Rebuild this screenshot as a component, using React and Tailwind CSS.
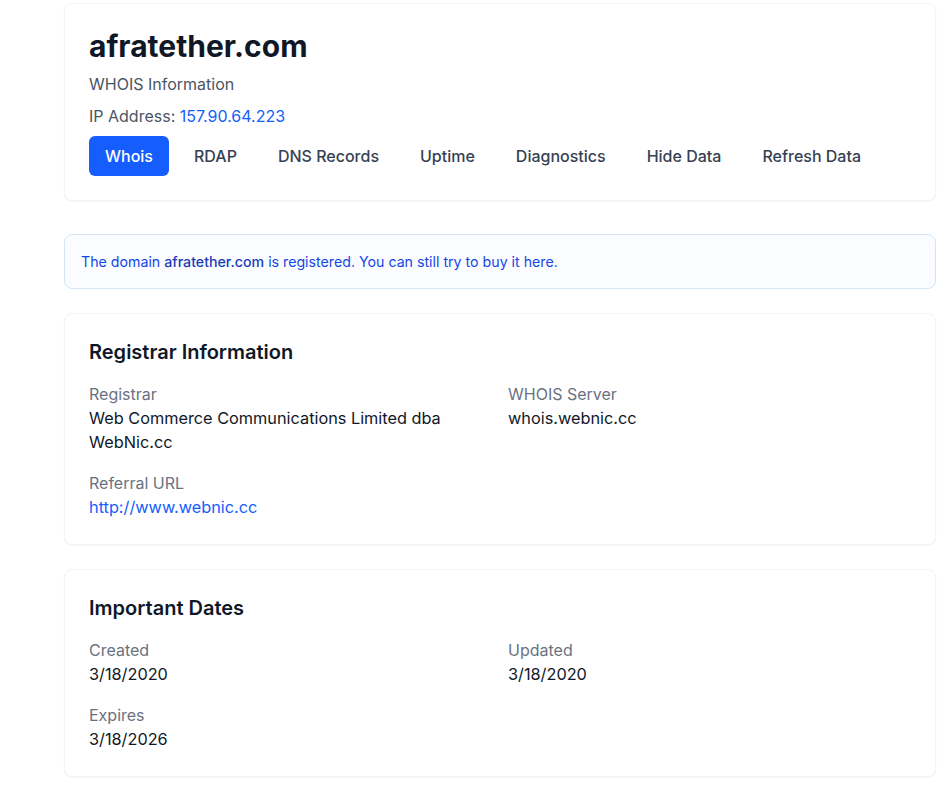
import React from 'react';

const tabs = ['Whois', 'RDAP', 'DNS Records', 'Uptime', 'Diagnostics', 'Hide Data', 'Refresh Data'];

const Field = ({ label, children }) => (
  <div>
    <div className="text-gray-500">{label}</div>
    <div className="text-[16.3px] leading-6 text-gray-900">{children}</div>
  </div>
);

const Card = ({ title, children }) => (
  <div className="rounded-lg border border-gray-100 bg-white px-6 pb-[25px] pt-6 shadow-[0_1px_2px_rgba(0,0,0,0.03)]">
    <h2 className="mb-4 text-xl font-semibold text-gray-900">{title}</h2>
    {children}
  </div>
);

export default function App() {
  return (
    <div
      className="min-h-screen bg-white pl-[64px] pr-[4px] pt-[3px] text-base"
      style={{ fontFamily: 'Inter, "Noto Sans", sans-serif' }}
    >
      {/* Header */}
      <div className="mb-[33px] rounded-lg border border-gray-100 bg-white p-6 shadow-[0_1px_2px_rgba(0,0,0,0.03)]">
        <h1 className="text-3xl font-bold text-gray-900">afratether.com</h1>
        <p className="mt-2 text-gray-600">WHOIS Information</p>
        <p className="mt-2 text-gray-600">
          IP Address: <span className="text-blue-600">157.90.64.223</span>
        </p>
        <div className="mt-2 flex gap-[9px]">
          {tabs.map((t, i) => (
            <button
              key={t}
              className={`rounded-md px-4 py-2 font-medium ${
                i === 0 ? 'bg-blue-600 text-white' : 'text-gray-700'
              }`}
            >
              {t}
            </button>
          ))}
        </div>
      </div>

      <div className="flex flex-col gap-6">
        {/* Notice */}
        <div className="rounded-lg border border-[#d3e6f8] bg-[#fafcff] p-4 text-[14.2px] leading-[21px] text-blue-700">
          The domain <span className="font-medium text-blue-800">afratether.com</span> is registered. You can
          still try to buy it here.
        </div>

        <Card title="Registrar Information">
          <div className="grid grid-cols-2 gap-x-4 gap-y-[17px]">
            <Field label="Registrar">Web Commerce Communications Limited dba WebNic.cc</Field>
            <Field label="WHOIS Server">whois.webnic.cc</Field>
            <div>
              <div className="text-gray-500">Referral URL</div>
              <div className="text-[16.3px] leading-6 text-blue-600">http://www.webnic.cc</div>
            </div>
          </div>
        </Card>

        <Card title="Important Dates">
          <div className="grid grid-cols-2 gap-x-4 gap-y-[17px]">
            <Field label="Created">3/18/2020</Field>
            <Field label="Updated">3/18/2020</Field>
            <Field label="Expires">3/18/2026</Field>
          </div>
        </Card>
      </div>
    </div>
  );
}
